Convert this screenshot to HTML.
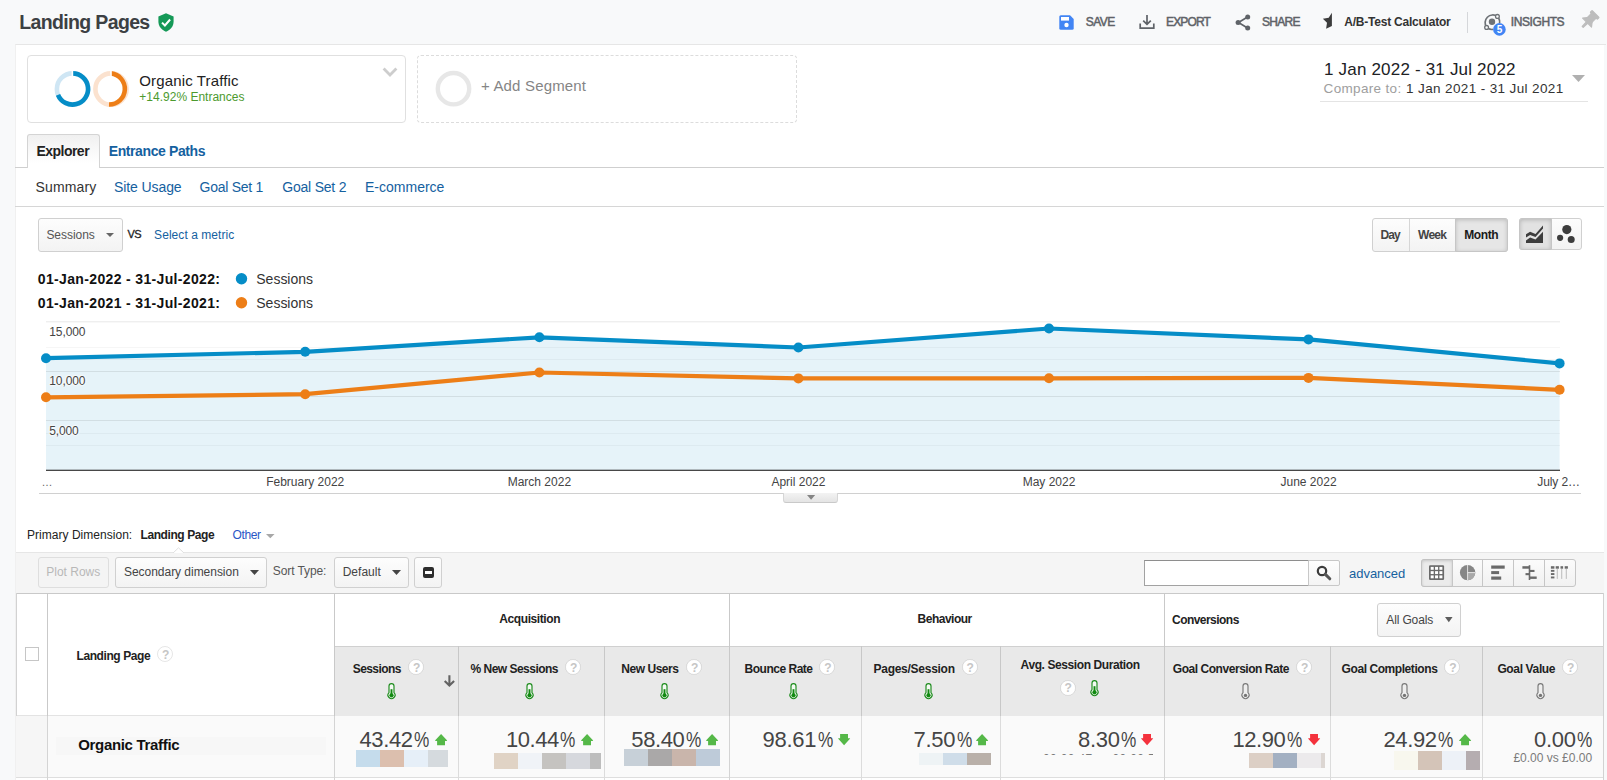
<!DOCTYPE html>
<html><head><meta charset="utf-8"><title>Landing Pages</title>
<style>
html,body{margin:0;padding:0;}
body{width:1607px;height:780px;overflow:hidden;background:#f8f9fa;position:relative;font-family:"Liberation Sans",sans-serif;}
.t{position:absolute;white-space:nowrap;font-family:"Liberation Sans",sans-serif;}
.b{position:absolute;box-sizing:border-box;}
svg{position:absolute;overflow:visible;}
</style></head><body>
<span class="t" style="left:19.3px;top:10.0px;font-size:19.5px;line-height:24px;color:#3c4043;font-weight:bold;letter-spacing:-0.648px;">Landing Pages</span>
<svg style="left:158px;top:12.5px" width="16" height="19" viewBox="0 0 16 19"><path d="M8 0.3 L15.6 3.4 V8.6 C15.6 13.4 12.4 17.3 8 18.7 C3.6 17.3 0.4 13.4 0.4 8.6 V3.4 Z" fill="#159957"/><path d="M4 9.6 L6.9 12.5 L12.1 6.5" fill="none" stroke="#fff" stroke-width="2"/></svg>
<svg style="left:1059px;top:15px" width="15" height="15" viewBox="0 0 15 15"><path d="M1.8 0.3 H11 L14.7 4 V13.2 Q14.7 14.7 13.2 14.7 H1.8 Q0.3 14.7 0.3 13.2 V1.8 Q0.3 0.3 1.8 0.3 Z" fill="#4285f4"/><rect x="2" y="2" width="8" height="3.6" fill="#fff"/><circle cx="7.5" cy="10" r="2.2" fill="#fff"/></svg>
<span class="t" style="left:1085.7px;top:13.7px;font-size:12px;line-height:16px;color:#5f6368;letter-spacing:-0.542px;-webkit-text-stroke:0.5px #5f6368;">SAVE</span>
<svg style="left:1139px;top:14px" width="16" height="16" viewBox="0 0 16 16"><path d="M8 1 V10 M4.2 6.6 L8 10.4 L11.8 6.6" fill="none" stroke="#5f6368" stroke-width="1.7"/><path d="M1.2 9.5 V14.2 H14.8 V9.5" fill="none" stroke="#5f6368" stroke-width="1.7"/></svg>
<span class="t" style="left:1166.0px;top:13.7px;font-size:12px;line-height:16px;color:#5f6368;letter-spacing:-0.865px;-webkit-text-stroke:0.5px #5f6368;">EXPORT</span>
<svg style="left:1235px;top:13.5px" width="16" height="17" viewBox="0 0 16 17"><path d="M12.5 3 L3.5 8.5 L12.5 14" fill="none" stroke="#5f6368" stroke-width="1.7"/><circle cx="12.7" cy="2.9" r="2.5" fill="#5f6368"/><circle cx="3.1" cy="8.5" r="2.5" fill="#5f6368"/><circle cx="12.7" cy="14.1" r="2.5" fill="#5f6368"/></svg>
<span class="t" style="left:1262.0px;top:13.7px;font-size:12px;line-height:16px;color:#5f6368;letter-spacing:-0.736px;-webkit-text-stroke:0.5px #5f6368;">SHARE</span>
<svg style="left:1320px;top:10px" width="14" height="20" viewBox="1320 10 14 20"><path d="M1331.9 12.8 L1328.7 17.7 L1322.9 18.7 L1327 22.7 L1326.1 28.7 L1331.9 26 Z" fill="#3c3c3c"/></svg>
<span class="t" style="left:1344.3px;top:13.7px;font-size:12px;line-height:16px;color:#333;font-weight:bold;letter-spacing:-0.225px;">A/B-Test Calculator</span>
<div class="b" style="left:1467px;top:12px;width:1px;height:21px;background:#d5d7da;"></div>
<svg style="left:1480px;top:10px" width="30" height="30" viewBox="1480 10 30 30"><path d="M1486.6 27.2 A7.7 7.7 0 0 1 1497.3 16.4" fill="none" stroke="#6e7276" stroke-width="1.7"/><path d="M1498.6 18 A7.7 7.7 0 0 1 1499.6 23" fill="none" stroke="#6e7276" stroke-width="1.7"/><path d="M1488.2 28.6 A7.7 7.7 0 0 0 1493 29.4" fill="none" stroke="#6e7276" stroke-width="1.7"/><circle cx="1492" cy="21.8" r="3.2" fill="#6e7276"/><circle cx="1497.4" cy="16.4" r="1.9" fill="#f8f9fa" stroke="#6e7276" stroke-width="1.3"/><circle cx="1486.6" cy="27.4" r="1.9" fill="#f8f9fa" stroke="#6e7276" stroke-width="1.3"/><circle cx="1499.4" cy="29.4" r="6.3" fill="#4285f4"/></svg>
<span class="t" style="left:1496.7px;top:22.6px;font-size:10px;line-height:14px;color:#fff;font-weight:bold;letter-spacing:-0.161px;">5</span>
<span class="t" style="left:1510.8px;top:13.7px;font-size:12px;line-height:16px;color:#5f6368;letter-spacing:-0.410px;-webkit-text-stroke:0.5px #5f6368;">INSIGHTS</span>
<svg style="left:1575px;top:5px" width="30" height="30" viewBox="1575 5 30 30"><g transform="translate(1588.9 20.7) rotate(45)" fill="#bdbdbd" stroke="#bdbdbd" stroke-width="1.2" stroke-linejoin="round"><rect x="-5" y="-9.5" width="10" height="2.6" rx="0.6"/><rect x="-3.3" y="-7.2" width="6.6" height="7"/><path d="M-3.3 -1.2 L-6.3 2.6 H6.3 L3.3 -1.2 Z"/><path d="M-0.9 3 L-0.7 8.8 H0.7 L0.9 3 Z"/></g></svg>
<div class="b" style="left:15px;top:44px;width:1589px;height:740px;background:#fff;border-top:1px solid #e6e6e6;border-left:1px solid #f0f0f0;"></div>
<div class="b" style="left:1604px;top:44px;width:2px;height:1px;background:#e6e6e6;"></div>
<div class="b" style="left:27px;top:55px;width:379px;height:68px;border:1px solid #e0e0e0;border-radius:4px;background:#fff;"></div>
<svg style="left:54px;top:70px" width="76" height="38" viewBox="0 0 76 38"><circle cx="18.5" cy="19" r="15.6" fill="none" stroke="#cfe6f4" stroke-width="4.6"/><path d="M18.5 3.4 A15.6 15.6 0 1 1 4 24.8" fill="none" stroke="#058dc7" stroke-width="4.6"/><circle cx="57" cy="19" r="15.6" fill="none" stroke="#fbe2cf" stroke-width="4.6"/><path d="M57 3.4 A15.6 15.6 0 0 1 55 34.5" fill="none" stroke="#ed7e17" stroke-width="4.6"/><rect x="17.6" y="0" width="1.6" height="8" fill="#fff"/><rect x="56.2" y="0" width="1.6" height="8" fill="#fff"/></svg>
<span class="t" style="left:139.3px;top:71.5px;font-size:15px;line-height:18px;color:#222;letter-spacing:0.139px;">Organic Traffic</span>
<span class="t" style="left:139.3px;top:90.0px;font-size:12px;line-height:14px;color:#4c9a2e;letter-spacing:0.008px;">+14.92% Entrances</span>
<svg style="left:382px;top:67px" width="16" height="10" viewBox="0 0 16 10"><path d="M1.6 1.6 L8 8 L14.4 1.6" fill="none" stroke="#cdcdcd" stroke-width="2.8"/></svg>
<div class="b" style="left:417px;top:55px;width:380px;height:68px;border:1px dashed #dcdcdc;border-radius:4px;"></div>
<svg style="left:430px;top:65px" width="48" height="48" viewBox="430 65 48 48"><circle cx="453.5" cy="88.7" r="15.7" fill="none" stroke="#e7e7e7" stroke-width="4.4"/></svg>
<span class="t" style="left:481.0px;top:77.0px;font-size:15px;line-height:18px;color:#858585;letter-spacing:0.168px;">+ Add Segment</span>
<span class="t" style="left:1324.0px;top:60.1px;font-size:17px;line-height:20px;color:#202124;letter-spacing:0.190px;">1 Jan 2022 - 31 Jul 2022</span>
<span class="t" style="left:1323.6px;top:80.9px;font-size:13.5px;line-height:16px;color:#9e9e9e;letter-spacing:0.332px;">Compare to:</span>
<span class="t" style="left:1406.0px;top:80.9px;font-size:13.5px;line-height:16px;color:#333;letter-spacing:0.374px;">1 Jan 2021 - 31 Jul 2021</span>
<div class="b" style="left:1320px;top:101px;width:268px;height:1px;background:#e4e4e4;"></div>
<svg style="left:1571.5px;top:74.5px" width="13" height="7" viewBox="0 0 13 7"><path d="M0 0 H13 L6.5 7 Z" fill="#b0b0b0"/></svg>
<div class="b" style="left:15px;top:167px;width:1589px;height:1px;background:#cfcfcf;"></div>
<div class="b" style="left:27px;top:134px;width:73px;height:34px;border:1px solid #d4d4d4;border-bottom:none;border-radius:3px 3px 0 0;background:linear-gradient(#f0f0f0,#fff 85%);"></div>
<span class="t" style="left:36.4px;top:142.0px;font-size:14px;line-height:18px;color:#222;font-weight:bold;letter-spacing:-0.514px;">Explorer</span>
<span class="t" style="left:108.7px;top:142.0px;font-size:14px;line-height:18px;color:#15619f;font-weight:bold;letter-spacing:-0.394px;">Entrance Paths</span>
<span class="t" style="left:35.5px;top:177.6px;font-size:14px;line-height:18px;color:#333;letter-spacing:0.134px;">Summary</span>
<span class="t" style="left:114.1px;top:177.6px;font-size:14px;line-height:18px;color:#15619f;letter-spacing:-0.109px;">Site Usage</span>
<span class="t" style="left:199.5px;top:177.6px;font-size:14px;line-height:18px;color:#15619f;letter-spacing:-0.250px;">Goal Set 1</span>
<span class="t" style="left:282.3px;top:177.6px;font-size:14px;line-height:18px;color:#15619f;letter-spacing:-0.216px;">Goal Set 2</span>
<span class="t" style="left:365.0px;top:177.6px;font-size:14px;line-height:18px;color:#15619f;letter-spacing:0.007px;">E-commerce</span>
<div class="b" style="left:15px;top:206px;width:1589px;height:1px;background:#d6d6d6;"></div>
<div class="b" style="left:38px;top:218px;width:85px;height:34px;border:1px solid #d0d0d0;border-radius:3px;background:linear-gradient(#fdfdfd,#f3f3f3);"></div>
<span class="t" style="left:46.4px;top:226.7px;font-size:12px;line-height:16px;color:#555;letter-spacing:-0.041px;">Sessions</span>
<svg style="left:106px;top:233px" width="8" height="4" viewBox="0 0 8 4"><path d="M0 0 H8 L4 4 Z" fill="#666"/></svg>
<span class="t" style="left:127.5px;top:227.2px;font-size:11px;line-height:14px;color:#222;letter-spacing:-0.575px;-webkit-text-stroke:0.3px #222;">VS</span>
<span class="t" style="left:154.1px;top:226.7px;font-size:12px;line-height:16px;color:#15619f;letter-spacing:0.053px;">Select a metric</span>
<div class="b" style="left:1372px;top:218px;width:136px;height:34px;border:1px solid #d0d0d0;border-radius:3px;background:linear-gradient(#fdfdfd,#f3f3f3);"></div>
<div class="b" style="left:1455px;top:218px;width:53px;height:34px;border:1px solid #c6c6c6;border-radius:0 3px 3px 0;background:#e6e6e6;box-shadow:inset 0 1px 4px rgba(0,0,0,0.18);"></div>
<div class="b" style="left:1409px;top:219px;width:1px;height:32px;background:#d6d6d6;"></div>
<span class="t" style="left:1380.6px;top:226.7px;font-size:12px;line-height:16px;color:#444;font-weight:bold;letter-spacing:-1.006px;">Day</span>
<span class="t" style="left:1418.0px;top:226.7px;font-size:12px;line-height:16px;color:#444;font-weight:bold;letter-spacing:-0.710px;">Week</span>
<span class="t" style="left:1464.2px;top:226.7px;font-size:12px;line-height:16px;color:#1a1a1a;font-weight:bold;letter-spacing:-0.395px;">Month</span>
<div class="b" style="left:1519px;top:218px;width:63px;height:32px;border:1px solid #d0d0d0;border-radius:3px;background:linear-gradient(#fdfdfd,#f3f3f3);"></div>
<div class="b" style="left:1519px;top:218px;width:33px;height:32px;border:1px solid #c6c6c6;border-radius:3px 0 0 3px;background:#e2e2e2;box-shadow:inset 0 1px 4px rgba(0,0,0,0.2);"></div>
<svg style="left:1526px;top:225px" width="18" height="18" viewBox="0 0 18 18"><path d="M0 18 V15.6 L4.1 12.6 L9.5 14.4 L17 6.7 V18 Z" fill="#3d3d3d"/><path d="M0 9.3 L4.1 6.8 L9.5 8.9 L17 0.4 V3.6 L9.5 12.1 L4.1 10 L0 12.5 Z" fill="#3d3d3d"/></svg>
<svg style="left:1556px;top:224px" width="22" height="20" viewBox="0 0 22 20"><circle cx="10.8" cy="5.6" r="4.6" fill="#3d3d3d"/><circle cx="4.1" cy="13.8" r="3.1" fill="#3d3d3d"/><circle cx="15.2" cy="15.4" r="3.5" fill="#3d3d3d"/></svg>
<span class="t" style="left:37.8px;top:270.0px;font-size:14px;line-height:18px;color:#111;font-weight:bold;letter-spacing:0.347px;">01-Jan-2022 - 31-Jul-2022:</span>
<span class="t" style="left:37.8px;top:294.0px;font-size:14px;line-height:18px;color:#111;font-weight:bold;letter-spacing:0.347px;">01-Jan-2021 - 31-Jul-2021:</span>
<svg style="left:230px;top:270px" width="24" height="42" viewBox="230 270 24 42"><circle cx="241.5" cy="278.8" r="5.7" fill="#058dc7"/><circle cx="241.5" cy="302.7" r="5.7" fill="#ed7e17"/></svg>
<span class="t" style="left:256.3px;top:270.0px;font-size:14px;line-height:18px;color:#333;letter-spacing:-0.015px;">Sessions</span>
<span class="t" style="left:256.3px;top:294.0px;font-size:14px;line-height:18px;color:#333;letter-spacing:-0.015px;">Sessions</span>
<svg style="left:0;top:0" width="1607" height="500" viewBox="0 0 1607 500"><polygon points="46,470 46.0,358.2 305.2,351.8 539.4,337.3 798.4,347.5 1049.0,328.5 1308.5,339.4 1559.6,363.4 1559.6,470" fill="#058dc7" fill-opacity="0.1"/><rect x="46" y="321.3" width="1514" height="1" fill="#e9e9e9"/><rect x="46" y="371" width="1514" height="1" fill="#000" fill-opacity="0.085"/><rect x="46" y="396" width="1514" height="1" fill="#000" fill-opacity="0.085"/><rect x="46" y="420" width="1514" height="1" fill="#000" fill-opacity="0.085"/><rect x="46" y="347" width="1514" height="1" fill="#000" fill-opacity="0.035"/><rect x="46" y="359" width="1514" height="1" fill="#000" fill-opacity="0.035"/><rect x="46" y="433" width="1514" height="1" fill="#000" fill-opacity="0.035"/><rect x="46" y="445" width="1514" height="1" fill="#000" fill-opacity="0.035"/><rect x="46" y="469.7" width="1514" height="1.2" fill="#333"/><polyline points="46.0,397.3 305.2,394.2 539.4,372.5 798.4,378.4 1049.0,378.3 1308.5,377.9 1559.6,389.8" fill="none" stroke="#ed7e17" stroke-width="4.2" stroke-linejoin="round"/><circle cx="46.0" cy="397.3" r="5" fill="#ed7e17"/><circle cx="305.2" cy="394.2" r="5" fill="#ed7e17"/><circle cx="539.4" cy="372.5" r="5" fill="#ed7e17"/><circle cx="798.4" cy="378.4" r="5" fill="#ed7e17"/><circle cx="1049.0" cy="378.3" r="5" fill="#ed7e17"/><circle cx="1308.5" cy="377.9" r="5" fill="#ed7e17"/><circle cx="1559.6" cy="389.8" r="5" fill="#ed7e17"/><polyline points="46.0,358.2 305.2,351.8 539.4,337.3 798.4,347.5 1049.0,328.5 1308.5,339.4 1559.6,363.4" fill="none" stroke="#058dc7" stroke-width="4.2" stroke-linejoin="round"/><circle cx="46.0" cy="358.2" r="5" fill="#058dc7"/><circle cx="305.2" cy="351.8" r="5" fill="#058dc7"/><circle cx="539.4" cy="337.3" r="5" fill="#058dc7"/><circle cx="798.4" cy="347.5" r="5" fill="#058dc7"/><circle cx="1049.0" cy="328.5" r="5" fill="#058dc7"/><circle cx="1308.5" cy="339.4" r="5" fill="#058dc7"/><circle cx="1559.6" cy="363.4" r="5" fill="#058dc7"/></svg>
<span class="t" style="left:49.2px;top:325.0px;font-size:12px;line-height:14px;color:#444;letter-spacing:-0.080px;text-shadow:0 0 2px #fff,0 0 2px #fff,0 0 3px #fff,0 0 3px #fff;">15,000</span>
<span class="t" style="left:49.2px;top:374.0px;font-size:12px;line-height:14px;color:#444;letter-spacing:-0.080px;text-shadow:0 0 2px #fff,0 0 2px #fff,0 0 3px #fff,0 0 3px #fff;">10,000</span>
<span class="t" style="left:49.2px;top:423.5px;font-size:12px;line-height:14px;color:#444;letter-spacing:-0.107px;text-shadow:0 0 2px #fff,0 0 2px #fff,0 0 3px #fff,0 0 3px #fff;">5,000</span>
<span class="t" style="left:266.2px;top:474.5px;font-size:12px;line-height:14px;color:#444;letter-spacing:-0.000px;">February 2022</span>
<span class="t" style="left:507.7px;top:474.5px;font-size:12px;line-height:14px;color:#444;letter-spacing:-0.000px;">March 2022</span>
<span class="t" style="left:771.4px;top:474.5px;font-size:12px;line-height:14px;color:#444;letter-spacing:-0.000px;">April 2022</span>
<span class="t" style="left:1022.7px;top:474.5px;font-size:12px;line-height:14px;color:#444;letter-spacing:0.000px;">May 2022</span>
<span class="t" style="left:1280.5px;top:474.5px;font-size:12px;line-height:14px;color:#444;letter-spacing:0.000px;">June 2022</span>
<span class="t" style="left:1537.3px;top:474.5px;font-size:12px;line-height:14px;color:#444;letter-spacing:-0.108px;">July 2…</span>
<span class="t" style="left:41.4px;top:474.5px;font-size:11px;line-height:14px;color:#666;letter-spacing:-2.000px;">…</span>
<div class="b" style="left:39px;top:493px;width:1542px;height:1px;background:#d0d0d0;"></div>
<div class="b" style="left:783px;top:493px;width:55px;height:10px;border:1px solid #d6d6d6;border-top:none;border-bottom-color:#c9c9c9;border-radius:0 0 3px 3px;background:linear-gradient(#f3f3f3,#e4e4e4);"></div>
<svg style="left:807px;top:495px" width="8.2" height="4.8" viewBox="0 0 8.2 4.8"><path d="M0 0 H8.2 L4.1 4.8 Z" fill="#858585"/></svg>
<span class="t" style="left:27.0px;top:527.0px;font-size:12px;line-height:16px;color:#222;letter-spacing:0.030px;">Primary Dimension:</span>
<span class="t" style="left:140.5px;top:527.0px;font-size:12px;line-height:16px;color:#222;font-weight:bold;letter-spacing:-0.415px;">Landing Page</span>
<span class="t" style="left:232.6px;top:527.0px;font-size:12px;line-height:16px;color:#2a56c6;letter-spacing:-0.402px;">Other</span>
<svg style="left:265.5px;top:533.6px" width="8.6" height="4.2" viewBox="0 0 8.6 4.2"><path d="M0 0 H8.6 L4.3 4.2 Z" fill="#a8a8a8"/></svg>
<div class="b" style="left:16px;top:552px;width:1588px;height:41px;background:#f5f5f5;border-top:1px solid #e6e6e6;"></div>
<svg style="left:172px;top:547px" width="13" height="7" viewBox="0 0 13 7"><path d="M0.5 6.5 L6.5 0.8 L12.5 6.5 Z" fill="#fff" stroke="#e0e0e0" stroke-width="1"/><rect x="0" y="6" width="13" height="1" fill="#f5f5f5"/></svg>
<div class="b" style="left:38px;top:557px;width:71px;height:31px;border:1px solid #dedede;border-radius:3px;background:#f4f4f4;"></div>
<span class="t" style="left:46.2px;top:564.0px;font-size:12px;line-height:16px;color:#b8b8b8;letter-spacing:0.010px;">Plot Rows</span>
<div class="b" style="left:115px;top:557px;width:152px;height:31px;border:1px solid #d0d0d0;border-radius:3px;background:linear-gradient(#fdfdfd,#f3f3f3);"></div>
<span class="t" style="left:124.0px;top:564.0px;font-size:12px;line-height:16px;color:#444;letter-spacing:-0.033px;">Secondary dimension</span>
<svg style="left:250px;top:569.5px" width="9" height="5" viewBox="0 0 9 5"><path d="M0 0 H9 L4.5 5 Z" fill="#444"/></svg>
<span class="t" style="left:272.8px;top:563.0px;font-size:12px;line-height:16px;color:#555;letter-spacing:-0.097px;">Sort Type:</span>
<div class="b" style="left:334px;top:557px;width:75px;height:31px;border:1px solid #d0d0d0;border-radius:3px;background:linear-gradient(#fdfdfd,#f3f3f3);"></div>
<span class="t" style="left:342.7px;top:564.0px;font-size:12px;line-height:16px;color:#444;letter-spacing:0.013px;">Default</span>
<svg style="left:391.5px;top:569.5px" width="9" height="5" viewBox="0 0 9 5"><path d="M0 0 H9 L4.5 5 Z" fill="#444"/></svg>
<div class="b" style="left:414px;top:557px;width:28px;height:31px;border:1px solid #d0d0d0;border-radius:3px;background:linear-gradient(#fdfdfd,#f3f3f3);"></div>
<div class="b" style="left:423px;top:567px;width:11px;height:11px;background:#2e2e2e;border-radius:2px;"></div>
<div class="b" style="left:425px;top:571.2px;width:7px;height:2.6px;background:#fff;"></div>
<div class="b" style="left:1144px;top:560px;width:165px;height:26px;border:1px solid #a2a2a2;border-top-color:#8e8e8e;background:#fff;"></div>
<div class="b" style="left:1308px;top:560px;width:32px;height:26px;border:1px solid #c8c8c8;border-radius:0 2px 2px 0;background:linear-gradient(#fefefe,#f4f4f4);"></div>
<svg style="left:1316px;top:565px" width="16" height="16" viewBox="0 0 16 16"><circle cx="6" cy="6" r="4.2" fill="none" stroke="#3c3c3c" stroke-width="2.2"/><path d="M9.4 9.4 L13.8 13.8" stroke="#555" stroke-width="3" stroke-linecap="round"/></svg>
<span class="t" style="left:1349.0px;top:565.9px;font-size:13px;line-height:16px;color:#15619f;letter-spacing:-0.025px;">advanced</span>
<div class="b" style="left:1421px;top:559px;width:155px;height:28px;border:1px solid #c6c6c6;border-radius:3px;background:linear-gradient(#fbfbfb,#f1f1f1);"></div>
<div class="b" style="left:1421px;top:559px;width:32px;height:28px;border:1px solid #c2c2c2;border-radius:3px 0 0 3px;background:#ebebeb;box-shadow:inset 0 1px 3px rgba(0,0,0,0.16);"></div>
<div class="b" style="left:1452px;top:560px;width:1px;height:26px;background:#c6c6c6;"></div>
<div class="b" style="left:1482px;top:560px;width:1px;height:26px;background:#c6c6c6;"></div>
<div class="b" style="left:1513px;top:560px;width:1px;height:26px;background:#c6c6c6;"></div>
<div class="b" style="left:1544px;top:560px;width:1px;height:26px;background:#c6c6c6;"></div>
<svg style="left:1420px;top:555px" width="160" height="36" viewBox="1420 555 160 36"><rect x="1429" y="565.2" width="15.1" height="14.8" rx="1.2" fill="#6a6a6a"/><rect x="1430.70" y="566.90" width="3" height="2.9" fill="#fff"/><rect x="1430.70" y="571.15" width="3" height="2.9" fill="#fff"/><rect x="1430.70" y="575.40" width="3" height="2.9" fill="#fff"/><rect x="1435.05" y="566.90" width="3" height="2.9" fill="#fff"/><rect x="1435.05" y="571.15" width="3" height="2.9" fill="#fff"/><rect x="1435.05" y="575.40" width="3" height="2.9" fill="#fff"/><rect x="1439.40" y="566.90" width="3" height="2.9" fill="#fff"/><rect x="1439.40" y="571.15" width="3" height="2.9" fill="#fff"/><rect x="1439.40" y="575.40" width="3" height="2.9" fill="#fff"/><circle cx="1467.6" cy="572.6" r="7.7" fill="#868686"/><path d="M1467.6 572.6 H1475.3 A7.7 7.7 0 0 1 1467.6 580.3 Z" fill="#a9a9a9"/><path d="M1467.6 564.9 V580.3 M1467.6 572.6 H1475.3" stroke="#ececec" stroke-width="0.9" fill="none"/><rect x="1491.2" y="565.5" width="13.5" height="3.2" fill="#6a6a6a"/><rect x="1491.2" y="571.1" width="7.9" height="3" fill="#6a6a6a"/><rect x="1491.2" y="576.5" width="10" height="3.2" fill="#6a6a6a"/><rect x="1528.7" y="565.2" width="1.6" height="14.8" fill="#6a6a6a"/><rect x="1522.4" y="566.2" width="7.4" height="2.5" fill="#6a6a6a"/><rect x="1529.5" y="569.9" width="5" height="2.1" fill="#6a6a6a"/><rect x="1525.5" y="573.1" width="4.3" height="2.1" fill="#6a6a6a"/><rect x="1529.5" y="576.5" width="7.2" height="2.4" fill="#6a6a6a"/><rect x="1550.9" y="566.2" width="3.5" height="2.5" fill="#6a6a6a"/><rect x="1555.7" y="566.2" width="3.2" height="2.5" fill="#6a6a6a"/><rect x="1560.5" y="566.2" width="2.6" height="2.5" fill="#6a6a6a"/><rect x="1564.7" y="566.2" width="3.2" height="2.5" fill="#6a6a6a"/><rect x="1550.9" y="569.9" width="3.5" height="1.9" fill="#6a6a6a"/><rect x="1550.9" y="573.1" width="3.5" height="1.9" fill="#6a6a6a"/><rect x="1550.9" y="576.5" width="3.5" height="1.9" fill="#6a6a6a"/><rect x="1556.8" y="568.9" width="0.9" height="10" fill="#b4b4b4"/><rect x="1561.3" y="568.9" width="0.9" height="10" fill="#b4b4b4"/><rect x="1565.8" y="568.9" width="0.9" height="10" fill="#b4b4b4"/></svg>
<div class="b" style="left:16px;top:593px;width:1588px;height:1px;background:#c9c9c9;"></div>
<div class="b" style="left:334px;top:646px;width:1270px;height:70px;background:#e9e9e9;"></div>
<div class="b" style="left:16px;top:716px;width:1588px;height:61px;background:#fafafa;"></div>
<div class="b" style="left:16px;top:777px;width:1588px;height:1px;background:#dedede;"></div>
<div class="b" style="left:16px;top:715px;width:318px;height:1px;background:#e3e3e3;"></div>
<div class="b" style="left:334px;top:646px;width:1270px;height:1px;background:#d0d0d0;"></div>
<div class="b" style="left:16px;top:593px;width:1px;height:123px;background:#d2d2d2;"></div>
<div class="b" style="left:1603px;top:593px;width:1px;height:187px;background:#d2d2d2;"></div>
<div class="b" style="left:47px;top:593px;width:1px;height:123px;background:#c9c9c9;"></div>
<div class="b" style="left:47px;top:716px;width:1px;height:64px;background:#d4d4d4;"></div>
<div class="b" style="left:334px;top:593px;width:1px;height:123px;background:#c9c9c9;"></div>
<div class="b" style="left:334px;top:716px;width:1px;height:64px;background:#d4d4d4;"></div>
<div class="b" style="left:729px;top:593px;width:1px;height:123px;background:#c9c9c9;"></div>
<div class="b" style="left:729px;top:716px;width:1px;height:64px;background:#d4d4d4;"></div>
<div class="b" style="left:1164px;top:593px;width:1px;height:123px;background:#c9c9c9;"></div>
<div class="b" style="left:1164px;top:716px;width:1px;height:64px;background:#d4d4d4;"></div>
<div class="b" style="left:458px;top:646px;width:1px;height:70px;background:#c8c8c8;"></div>
<div class="b" style="left:458px;top:716px;width:1px;height:64px;background:#dcdcdc;"></div>
<div class="b" style="left:604px;top:646px;width:1px;height:70px;background:#c8c8c8;"></div>
<div class="b" style="left:604px;top:716px;width:1px;height:64px;background:#dcdcdc;"></div>
<div class="b" style="left:861px;top:646px;width:1px;height:70px;background:#c8c8c8;"></div>
<div class="b" style="left:861px;top:716px;width:1px;height:64px;background:#dcdcdc;"></div>
<div class="b" style="left:1000px;top:646px;width:1px;height:70px;background:#c8c8c8;"></div>
<div class="b" style="left:1000px;top:716px;width:1px;height:64px;background:#dcdcdc;"></div>
<div class="b" style="left:1330px;top:646px;width:1px;height:70px;background:#c8c8c8;"></div>
<div class="b" style="left:1330px;top:716px;width:1px;height:64px;background:#dcdcdc;"></div>
<div class="b" style="left:1482px;top:646px;width:1px;height:70px;background:#c8c8c8;"></div>
<div class="b" style="left:1482px;top:716px;width:1px;height:64px;background:#dcdcdc;"></div>
<div class="b" style="left:25px;top:647px;width:14px;height:14px;border:1px solid #c6c6c6;background:#fff;"></div>
<span class="t" style="left:76.5px;top:648.2px;font-size:12px;line-height:16px;color:#222;font-weight:bold;letter-spacing:-0.415px;">Landing Page</span>
<svg style="left:156.0px;top:645.4px" width="18" height="18" viewBox="0 0 18 18"><circle cx="9" cy="9" r="7.5" fill="#fff" stroke="#000" stroke-opacity="0.1" stroke-width="1"/></svg>
<span class="t" style="left:161.9px;top:648.6px;font-size:12px;line-height:12px;color:#c6c6c6;font-weight:bold;letter-spacing:-1.129px;">?</span>
<span class="t" style="left:499.3px;top:610.6px;font-size:12px;line-height:16px;color:#222;font-weight:bold;letter-spacing:-0.413px;">Acquisition</span>
<span class="t" style="left:917.6px;top:610.6px;font-size:12px;line-height:16px;color:#222;font-weight:bold;letter-spacing:-0.510px;">Behaviour</span>
<span class="t" style="left:1172.0px;top:611.8px;font-size:12px;line-height:16px;color:#222;font-weight:bold;letter-spacing:-0.538px;">Conversions</span>
<div class="b" style="left:1377px;top:603px;width:84px;height:34px;border:1px solid #d0d0d0;border-radius:3px;background:linear-gradient(#fdfdfd,#f3f3f3);"></div>
<span class="t" style="left:1386.3px;top:612.0px;font-size:12px;line-height:16px;color:#444;letter-spacing:-0.140px;">All Goals</span>
<svg style="left:1444.6px;top:616.9px" width="7.6" height="5.2" viewBox="0 0 7.6 5.2"><path d="M0 0 H7.6 L3.8 5.2 Z" fill="#5e5e5e"/></svg>
<span class="t" style="left:352.7px;top:660.5px;font-size:12px;line-height:16px;color:#222;font-weight:bold;letter-spacing:-0.556px;">Sessions</span>
<svg style="left:407.0px;top:658.3px" width="18" height="18" viewBox="0 0 18 18"><circle cx="9" cy="9" r="7.5" fill="#fff" stroke="#000" stroke-opacity="0.1" stroke-width="1"/></svg>
<span class="t" style="left:412.9px;top:661.5px;font-size:12px;line-height:12px;color:#c6c6c6;font-weight:bold;letter-spacing:-1.129px;">?</span>
<svg style="left:387.0px;top:682.6px" width="9" height="17" viewBox="0 0 9 17"><path d="M2 3.1 A2.5 2.5 0 0 1 7 3.1 V9.6 A3.5 3.5 0 1 1 2 9.6 Z" fill="#f4faf3" stroke="#1a8a1a" stroke-width="1.15"/><circle cx="4.5" cy="12.3" r="2.1" fill="#128a12"/><rect x="3.55" y="6.2" width="1.9" height="6" fill="#128a12"/></svg>
<span class="t" style="left:470.6px;top:660.5px;font-size:12px;line-height:16px;color:#222;font-weight:bold;letter-spacing:-0.523px;">% New Sessions</span>
<svg style="left:564.0px;top:658.3px" width="18" height="18" viewBox="0 0 18 18"><circle cx="9" cy="9" r="7.5" fill="#fff" stroke="#000" stroke-opacity="0.1" stroke-width="1"/></svg>
<span class="t" style="left:569.9px;top:661.5px;font-size:12px;line-height:12px;color:#c6c6c6;font-weight:bold;letter-spacing:-1.129px;">?</span>
<svg style="left:524.5px;top:682.6px" width="9" height="17" viewBox="0 0 9 17"><path d="M2 3.1 A2.5 2.5 0 0 1 7 3.1 V9.6 A3.5 3.5 0 1 1 2 9.6 Z" fill="#f4faf3" stroke="#1a8a1a" stroke-width="1.15"/><circle cx="4.5" cy="12.3" r="2.1" fill="#128a12"/><rect x="3.55" y="6.2" width="1.9" height="6" fill="#128a12"/></svg>
<span class="t" style="left:621.2px;top:660.5px;font-size:12px;line-height:16px;color:#222;font-weight:bold;letter-spacing:-0.445px;">New Users</span>
<svg style="left:685.2px;top:658.3px" width="18" height="18" viewBox="0 0 18 18"><circle cx="9" cy="9" r="7.5" fill="#fff" stroke="#000" stroke-opacity="0.1" stroke-width="1"/></svg>
<span class="t" style="left:691.1px;top:661.5px;font-size:12px;line-height:12px;color:#c6c6c6;font-weight:bold;letter-spacing:-1.129px;">?</span>
<svg style="left:660.2px;top:682.6px" width="9" height="17" viewBox="0 0 9 17"><path d="M2 3.1 A2.5 2.5 0 0 1 7 3.1 V9.6 A3.5 3.5 0 1 1 2 9.6 Z" fill="#f4faf3" stroke="#1a8a1a" stroke-width="1.15"/><circle cx="4.5" cy="12.3" r="2.1" fill="#128a12"/><rect x="3.55" y="6.2" width="1.9" height="6" fill="#128a12"/></svg>
<span class="t" style="left:744.6px;top:660.5px;font-size:12px;line-height:16px;color:#222;font-weight:bold;letter-spacing:-0.494px;">Bounce Rate</span>
<svg style="left:818.3px;top:658.3px" width="18" height="18" viewBox="0 0 18 18"><circle cx="9" cy="9" r="7.5" fill="#fff" stroke="#000" stroke-opacity="0.1" stroke-width="1"/></svg>
<span class="t" style="left:824.2px;top:661.5px;font-size:12px;line-height:12px;color:#c6c6c6;font-weight:bold;letter-spacing:-1.129px;">?</span>
<svg style="left:788.7px;top:682.6px" width="9" height="17" viewBox="0 0 9 17"><path d="M2 3.1 A2.5 2.5 0 0 1 7 3.1 V9.6 A3.5 3.5 0 1 1 2 9.6 Z" fill="#f4faf3" stroke="#1a8a1a" stroke-width="1.15"/><circle cx="4.5" cy="12.3" r="2.1" fill="#128a12"/><rect x="3.55" y="6.2" width="1.9" height="6" fill="#128a12"/></svg>
<span class="t" style="left:873.5px;top:660.5px;font-size:12px;line-height:16px;color:#222;font-weight:bold;letter-spacing:-0.267px;">Pages/Session</span>
<svg style="left:960.7px;top:658.3px" width="18" height="18" viewBox="0 0 18 18"><circle cx="9" cy="9" r="7.5" fill="#fff" stroke="#000" stroke-opacity="0.1" stroke-width="1"/></svg>
<span class="t" style="left:966.6px;top:661.5px;font-size:12px;line-height:12px;color:#c6c6c6;font-weight:bold;letter-spacing:-1.129px;">?</span>
<svg style="left:924.2px;top:682.6px" width="9" height="17" viewBox="0 0 9 17"><path d="M2 3.1 A2.5 2.5 0 0 1 7 3.1 V9.6 A3.5 3.5 0 1 1 2 9.6 Z" fill="#f4faf3" stroke="#1a8a1a" stroke-width="1.15"/><circle cx="4.5" cy="12.3" r="2.1" fill="#128a12"/><rect x="3.55" y="6.2" width="1.9" height="6" fill="#128a12"/></svg>
<span class="t" style="left:1172.8px;top:660.5px;font-size:12px;line-height:16px;color:#222;font-weight:bold;letter-spacing:-0.455px;">Goal Conversion Rate</span>
<svg style="left:1295.1px;top:658.3px" width="18" height="18" viewBox="0 0 18 18"><circle cx="9" cy="9" r="7.5" fill="#fff" stroke="#000" stroke-opacity="0.1" stroke-width="1"/></svg>
<span class="t" style="left:1301.0px;top:661.5px;font-size:12px;line-height:12px;color:#c6c6c6;font-weight:bold;letter-spacing:-1.129px;">?</span>
<svg style="left:1240.7px;top:682.6px" width="9" height="17" viewBox="0 0 9 17"><path d="M2 3.1 A2.5 2.5 0 0 1 7 3.1 V9.6 A3.5 3.5 0 1 1 2 9.6 Z" fill="#eeeeee" stroke="#787878" stroke-width="1.15"/><circle cx="4.5" cy="12.4" r="1.7" fill="#747474"/></svg>
<span class="t" style="left:1341.6px;top:660.5px;font-size:12px;line-height:16px;color:#222;font-weight:bold;letter-spacing:-0.431px;">Goal Completions</span>
<svg style="left:1443.4px;top:658.3px" width="18" height="18" viewBox="0 0 18 18"><circle cx="9" cy="9" r="7.5" fill="#fff" stroke="#000" stroke-opacity="0.1" stroke-width="1"/></svg>
<span class="t" style="left:1449.3px;top:661.5px;font-size:12px;line-height:12px;color:#c6c6c6;font-weight:bold;letter-spacing:-1.129px;">?</span>
<svg style="left:1399.5px;top:682.6px" width="9" height="17" viewBox="0 0 9 17"><path d="M2 3.1 A2.5 2.5 0 0 1 7 3.1 V9.6 A3.5 3.5 0 1 1 2 9.6 Z" fill="#eeeeee" stroke="#787878" stroke-width="1.15"/><circle cx="4.5" cy="12.4" r="1.7" fill="#747474"/></svg>
<span class="t" style="left:1497.4px;top:660.5px;font-size:12px;line-height:16px;color:#222;font-weight:bold;letter-spacing:-0.362px;">Goal Value</span>
<svg style="left:1561.0px;top:658.3px" width="18" height="18" viewBox="0 0 18 18"><circle cx="9" cy="9" r="7.5" fill="#fff" stroke="#000" stroke-opacity="0.1" stroke-width="1"/></svg>
<span class="t" style="left:1566.9px;top:661.5px;font-size:12px;line-height:12px;color:#c6c6c6;font-weight:bold;letter-spacing:-1.129px;">?</span>
<svg style="left:1536.1px;top:682.6px" width="9" height="17" viewBox="0 0 9 17"><path d="M2 3.1 A2.5 2.5 0 0 1 7 3.1 V9.6 A3.5 3.5 0 1 1 2 9.6 Z" fill="#eeeeee" stroke="#787878" stroke-width="1.15"/><circle cx="4.5" cy="12.4" r="1.7" fill="#747474"/></svg>
<span class="t" style="left:1020.6px;top:657.0px;font-size:12px;line-height:16px;color:#222;font-weight:bold;letter-spacing:-0.408px;">Avg. Session Duration</span>
<svg style="left:1058.5px;top:678.9px" width="18" height="18" viewBox="0 0 18 18"><circle cx="9" cy="9" r="7.5" fill="#fff" stroke="#000" stroke-opacity="0.1" stroke-width="1"/></svg>
<span class="t" style="left:1064.4px;top:682.1px;font-size:12px;line-height:12px;color:#c6c6c6;font-weight:bold;letter-spacing:-1.129px;">?</span>
<svg style="left:1089.7px;top:679.8px" width="9" height="17" viewBox="0 0 9 17"><path d="M2 3.1 A2.5 2.5 0 0 1 7 3.1 V9.6 A3.5 3.5 0 1 1 2 9.6 Z" fill="#f4faf3" stroke="#1a8a1a" stroke-width="1.15"/><circle cx="4.5" cy="12.3" r="2.1" fill="#128a12"/><rect x="3.55" y="6.2" width="1.9" height="6" fill="#128a12"/></svg>
<svg style="left:444px;top:675px" width="11" height="12" viewBox="0 0 11 12"><path d="M5.4 0.2 V10.4 M0.7 5.9 L5.4 10.6 L10.1 5.9" fill="none" stroke="#636363" stroke-width="2.1"/></svg>
<div class="b" style="left:16px;top:716px;width:31px;height:61px;background:#f6f6f6;"></div>
<div class="b" style="left:56px;top:737px;width:270px;height:18px;background:#f7f7f7;"></div>
<span class="t" style="left:78.2px;top:736.3px;font-size:15px;line-height:18px;color:#111;font-weight:bold;letter-spacing:-0.318px;">Organic Traffic</span>
<span class="t" style="left:359.4px;top:726.9px;font-size:22px;line-height:26px;color:#454545;letter-spacing:-0.362px;">43.42</span>
<span class="t" style="left:414.0px;top:726.9px;font-size:22px;line-height:26px;color:#454545;transform:scaleX(0.782);transform-origin:0 0;">%</span>
<svg style="left:435.0px;top:733.8px" width="12.2" height="11.2" viewBox="0 0 12.2 11.2"><path d="M6.1 0 L12.2 6.6 L11.6 7 H10 V11.2 H2.1 V7 H0.6 L0 6.6 Z" fill="#55b848"/></svg>
<span class="t" style="left:505.9px;top:726.9px;font-size:22px;line-height:26px;color:#454545;letter-spacing:-0.437px;">10.44</span>
<span class="t" style="left:560.2px;top:726.9px;font-size:22px;line-height:26px;color:#454545;transform:scaleX(0.782);transform-origin:0 0;">%</span>
<svg style="left:581.1px;top:733.8px" width="12.2" height="11.2" viewBox="0 0 12.2 11.2"><path d="M6.1 0 L12.2 6.6 L11.6 7 H10 V11.2 H2.1 V7 H0.6 L0 6.6 Z" fill="#55b848"/></svg>
<span class="t" style="left:631.3px;top:726.9px;font-size:22px;line-height:26px;color:#454545;letter-spacing:-0.387px;">58.40</span>
<span class="t" style="left:685.8px;top:726.9px;font-size:22px;line-height:26px;color:#454545;transform:scaleX(0.782);transform-origin:0 0;">%</span>
<svg style="left:705.9px;top:733.8px" width="12.2" height="11.2" viewBox="0 0 12.2 11.2"><path d="M6.1 0 L12.2 6.6 L11.6 7 H10 V11.2 H2.1 V7 H0.6 L0 6.6 Z" fill="#55b848"/></svg>
<span class="t" style="left:762.4px;top:726.9px;font-size:22px;line-height:26px;color:#454545;letter-spacing:-0.237px;">98.61</span>
<span class="t" style="left:817.5px;top:726.9px;font-size:22px;line-height:26px;color:#454545;transform:scaleX(0.782);transform-origin:0 0;">%</span>
<svg style="left:838.2px;top:733.8px" width="12.2" height="11.2" viewBox="0 0 12.2 11.2"><path d="M6.1 11.2 L12.2 4.6 L11.6 4.2 H10 V0 H2.1 V4.2 H0.6 L0 4.6 Z" fill="#55b848"/></svg>
<span class="t" style="left:913.6px;top:726.9px;font-size:22px;line-height:26px;color:#454545;letter-spacing:-0.305px;">7.50</span>
<span class="t" style="left:956.5px;top:726.9px;font-size:22px;line-height:26px;color:#454545;transform:scaleX(0.782);transform-origin:0 0;">%</span>
<svg style="left:976.3px;top:733.8px" width="12.2" height="11.2" viewBox="0 0 12.2 11.2"><path d="M6.1 0 L12.2 6.6 L11.6 7 H10 V11.2 H2.1 V7 H0.6 L0 6.6 Z" fill="#55b848"/></svg>
<span class="t" style="left:1078.0px;top:726.9px;font-size:22px;line-height:26px;color:#454545;letter-spacing:-0.271px;">8.30</span>
<span class="t" style="left:1121.0px;top:726.9px;font-size:22px;line-height:26px;color:#454545;transform:scaleX(0.782);transform-origin:0 0;">%</span>
<svg style="left:1141.1px;top:733.8px" width="12.2" height="11.2" viewBox="0 0 12.2 11.2"><path d="M6.1 11.2 L12.2 4.6 L11.6 4.2 H10 V0 H2.1 V4.2 H0.6 L0 4.6 Z" fill="#f4323d"/></svg>
<span class="t" style="left:1232.4px;top:726.9px;font-size:22px;line-height:26px;color:#454545;letter-spacing:-0.437px;">12.90</span>
<span class="t" style="left:1286.7px;top:726.9px;font-size:22px;line-height:26px;color:#454545;transform:scaleX(0.782);transform-origin:0 0;">%</span>
<svg style="left:1307.6px;top:733.8px" width="12.2" height="11.2" viewBox="0 0 12.2 11.2"><path d="M6.1 11.2 L12.2 4.6 L11.6 4.2 H10 V0 H2.1 V4.2 H0.6 L0 4.6 Z" fill="#f4323d"/></svg>
<span class="t" style="left:1383.5px;top:726.9px;font-size:22px;line-height:26px;color:#454545;letter-spacing:-0.362px;">24.92</span>
<span class="t" style="left:1438.1px;top:726.9px;font-size:22px;line-height:26px;color:#454545;transform:scaleX(0.782);transform-origin:0 0;">%</span>
<svg style="left:1458.7px;top:733.8px" width="12.2" height="11.2" viewBox="0 0 12.2 11.2"><path d="M6.1 0 L12.2 6.6 L11.6 7 H10 V11.2 H2.1 V7 H0.6 L0 6.6 Z" fill="#55b848"/></svg>
<span class="t" style="left:1534.1px;top:726.9px;font-size:22px;line-height:26px;color:#454545;letter-spacing:-0.338px;">0.00</span>
<span class="t" style="left:1576.9px;top:726.9px;font-size:22px;line-height:26px;color:#454545;transform:scaleX(0.782);transform-origin:0 0;">%</span>
<span class="t" style="left:1513.4px;top:750.5px;font-size:12px;line-height:14px;color:#7a7a7a;letter-spacing:-0.002px;">£0.00 vs £0.00</span>
<div class="b" style="left:355.8px;top:750px;width:92.1px;height:16.8px;background:linear-gradient(90deg,#c5dcec 0.0px,#c5dcec 23.9px,#dcbfae 23.9px,#dcbfae 47.8px,#e6eff8 47.8px,#e6eff8 71.7px,#d5dade 71.7px,#d5dade 92.1px);"></div>
<div class="b" style="left:493.8px;top:753.2px;width:107.1px;height:15.7px;background:linear-gradient(90deg,#e0d3c5 0.0px,#e0d3c5 24.1px,#f0f3f7 24.1px,#f0f3f7 48.1px,#c5c3c0 48.1px,#c5c3c0 72.2px,#d6d8dd 72.2px,#d6d8dd 96.2px,#bdbdbd 96.2px,#bdbdbd 107.1px);"></div>
<div class="b" style="left:624px;top:749.2px;width:96px;height:16.6px;background:linear-gradient(90deg,#c7d0d8 0.0px,#c7d0d8 24.1px,#aaa8a8 24.1px,#aaa8a8 47.9px,#c9b5ab 47.9px,#c9b5ab 71.9px,#becbd9 71.9px,#becbd9 96.0px);"></div>
<div class="b" style="left:918.7px;top:753.2px;width:72.1px;height:11.4px;background:linear-gradient(90deg,#eef3f5 0.0px,#eef3f5 24.0px,#cfdde9 24.0px,#cfdde9 48.1px,#b9b0a9 48.1px,#b9b0a9 72.1px);"></div>
<div class="b" style="left:1248.9px;top:753.2px;width:76.1px;height:14.6px;background:linear-gradient(90deg,#dccfc5 0.0px,#dccfc5 24.1px,#a3b0c2 24.1px,#a3b0c2 48.1px,#eceaec 48.1px,#eceaec 72.1px,#dcd6d2 72.1px,#dcd6d2 76.1px);"></div>
<div class="b" style="left:1393.7px;top:751.2px;width:86.2px;height:18.6px;background:linear-gradient(90deg,#f8f7ee 0.0px,#f8f7ee 24.1px,#d4c4b8 24.1px,#d4c4b8 48.1px,#edf1f7 48.1px,#edf1f7 72.2px,#b5adb0 72.2px,#b5adb0 86.2px);"></div>
<div class="b" style="left:1043px;top:753px;width:110px;height:1.6px;overflow:hidden;"><span class="t" style="left:0;top:-1.5px;font-size:12px;line-height:14px;color:#7a7a7a;letter-spacing:0.35px;">00:00:47 vs 00:00:52</span></div>
</body></html>
